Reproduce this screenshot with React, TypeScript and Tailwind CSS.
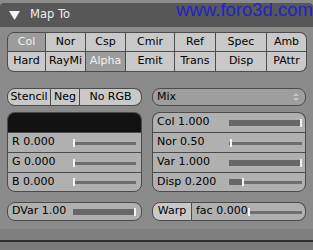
import React from "react";

const ROW1 = [
  { label: "Col", w: 39, on: true },
  { label: "Nor", w: 40 },
  { label: "Csp", w: 40 },
  { label: "Cmir", w: 49 },
  { label: "Ref", w: 41 },
  { label: "Spec", w: 51 },
  { label: "Amb", w: 40 },
];

const ROW2 = [
  { label: "Hard", w: 39 },
  { label: "RayMi", w: 40 },
  { label: "Alpha", w: 40, on: true },
  { label: "Emit", w: 49 },
  { label: "Trans", w: 41 },
  { label: "Disp", w: 51 },
  { label: "PAttr", w: 40 },
];

type Btn = { label: string; w: number; on?: boolean };

function ToggleRow({ items, top }: { items: Btn[]; top: boolean }) {
  return (
    <div className="flex">
      {items.map((b, i) => {
        const first = i === 0;
        const last = i === items.length - 1;
        const round =
          (first && top ? "rounded-tl-[7px] " : "") +
          (first && !top ? "rounded-bl-[7px] " : "") +
          (last && top ? "rounded-tr-[7px] " : "") +
          (last && !top ? "rounded-br-[7px] " : "");
        return (
          <div
            key={b.label}
            style={{ width: b.w }}
            className={`flex h-[20px] items-center justify-center border-[#4b4b4b] ${
              top ? "border-t border-b" : "border-b"
            } ${first ? "border-l" : ""} border-r ${round} ${
              b.on ? "bg-[#9c9c9c] text-[#f2f2f2]" : "bg-[#c9c9c9] text-black"
            }`}
          >
            {b.label}
          </div>
        );
      })}
    </div>
  );
}

function Track({ w, fill, thick }: { w: number; fill: number; thick?: boolean }) {
  const pos = Math.round((w - 2) * fill);
  return (
    <div className="relative h-[8px]" style={{ width: w }}>
      <div className="absolute left-0 right-0 top-[3px] h-[3px] bg-[#6e6e6e]" />
      {thick && <div className="absolute left-0 top-[1px] h-[6px] bg-[#676767]" style={{ width: pos }} />}
      <div className="absolute top-0 h-[8px] w-[2px] bg-[#f4f4f4]" style={{ left: pos }} />
    </div>
  );
}

function SliderRow({
  label,
  fill,
  thick,
  w,
  mr,
  cls,
}: {
  label: string;
  fill: number;
  thick?: boolean;
  w: number;
  mr: number;
  cls: string;
}) {
  return (
    <div className={`flex h-[20px] items-center border-x border-[#4b4b4b] bg-[#b0b0b0] pl-[4px] ${cls}`}>
      <span className="flex-1">{label}</span>
      <div style={{ marginRight: mr }}>
        <Track w={w} fill={fill} thick={thick} />
      </div>
    </div>
  );
}

export default function App() {
  return (
    <div
      className="relative h-[250px] w-[313px] overflow-hidden bg-[#8b8b8b] text-[11px] text-black"
      style={{ fontFamily: '"DejaVu Sans", sans-serif' }}
    >
      <div className="h-[3px] bg-[#8b8b8b]" />
      <div className="flex h-[24px] items-center rounded-t-[4px] bg-[#575757] pl-[9px] text-[11.5px] text-[#ececec]">
        <svg width="11" height="9" viewBox="0 0 11 9" className="mt-[1px]">
          <polygon points="0,0 11,0 5.5,9" fill="#f4f4f4" />
        </svg>
        <span className="ml-[10px]">Map To</span>
      </div>

      <div
        className="absolute right-0 top-[-4px] text-[18.5px] text-[#2323c8]"
        style={{ fontFamily: '"Liberation Sans", Arial, sans-serif' }}
      >
        www.foro3d.com
      </div>

      <div className="pl-[7px] pt-[5px]">
        <ToggleRow items={ROW1} top />
        <ToggleRow items={ROW2} top={false} />

        <div className="mt-[16px] flex">
          <div className="flex h-[18px] w-[135px]">
            <div className="flex w-[44px] items-center justify-center rounded-l-[8px] border border-[#4b4b4b] bg-[#c9c9c9]">
              Stencil
            </div>
            <div className="flex w-[29px] items-center justify-center border-y border-r border-[#4b4b4b] bg-[#c9c9c9]">
              Neg
            </div>
            <div className="flex flex-1 items-center justify-center rounded-r-[8px] border-y border-r border-[#4b4b4b] bg-[#c9c9c9]">
              No RGB
            </div>
          </div>
          <div className="ml-[10px] flex h-[18px] w-[154px] items-center justify-between rounded-[8px] border border-[#4b4b4b] bg-[#9e9e9e] pl-[4px] pr-[6px]">
            <span>Mix</span>
            <svg width="6" height="10" viewBox="0 0 6 10">
              <polygon points="0,4 6,4 3,1" fill="#c4c4c4" />
              <polygon points="0,6 6,6 3,9" fill="#c4c4c4" />
            </svg>
          </div>
        </div>

        <div className="mt-[6px] flex">
          <div className="w-[135px]">
            <div className="h-[20px] rounded-t-[8px] border-x border-t border-[#4b4b4b] bg-[#121212]" />
            <SliderRow label="R 0.000" fill={0} w={63} mr={5} cls="border-t" />
            <SliderRow label="G 0.000" fill={0} w={63} mr={5} cls="border-t" />
            <SliderRow label="B 0.000" fill={0} w={63} mr={5} cls="border-y rounded-b-[8px]" />
          </div>
          <div className="ml-[10px] w-[154px]">
            <SliderRow label="Col 1.000" fill={1} thick w={73} mr={3} cls="border-t rounded-t-[8px]" />
            <SliderRow label="Nor 0.50" fill={0.02} w={73} mr={3} cls="border-t" />
            <SliderRow label="Var 1.000" fill={1} thick w={73} mr={3} cls="border-t" />
            <SliderRow label="Disp 0.200" fill={0.18} thick w={73} mr={3} cls="border-y rounded-b-[8px]" />
          </div>
        </div>

        <div className="mt-[10px] flex">
          <div className="flex h-[19px] w-[135px] items-center rounded-[8px] border border-[#4b4b4b] bg-[#b0b0b0] pl-[4px]">
            <span className="flex-1">DVar 1.00</span>
            <div className="mr-[5px]">
              <Track w={63} fill={1} thick />
            </div>
          </div>
          <div className="ml-[10px] flex h-[19px] w-[154px]">
            <div className="flex w-[40px] items-center justify-center rounded-l-[8px] border border-[#4b4b4b] bg-[#c9c9c9]">
              Warp
            </div>
            <div className="flex flex-1 items-center rounded-r-[8px] border-y border-r border-[#4b4b4b] bg-[#b0b0b0] pl-[4px]">
              <span className="flex-1">fac 0.000</span>
              <div className="mr-[3px]">
                <Track w={54} fill={0} />
              </div>
            </div>
          </div>
        </div>
      </div>

      <div className="mt-[8px] h-[11px] bg-[#7f7f7f]" />
      <div className="h-[2px] bg-[#2e2e2e]" />
      <div className="h-[20px] bg-[#7a7a7a]" />
    </div>
  );
}
